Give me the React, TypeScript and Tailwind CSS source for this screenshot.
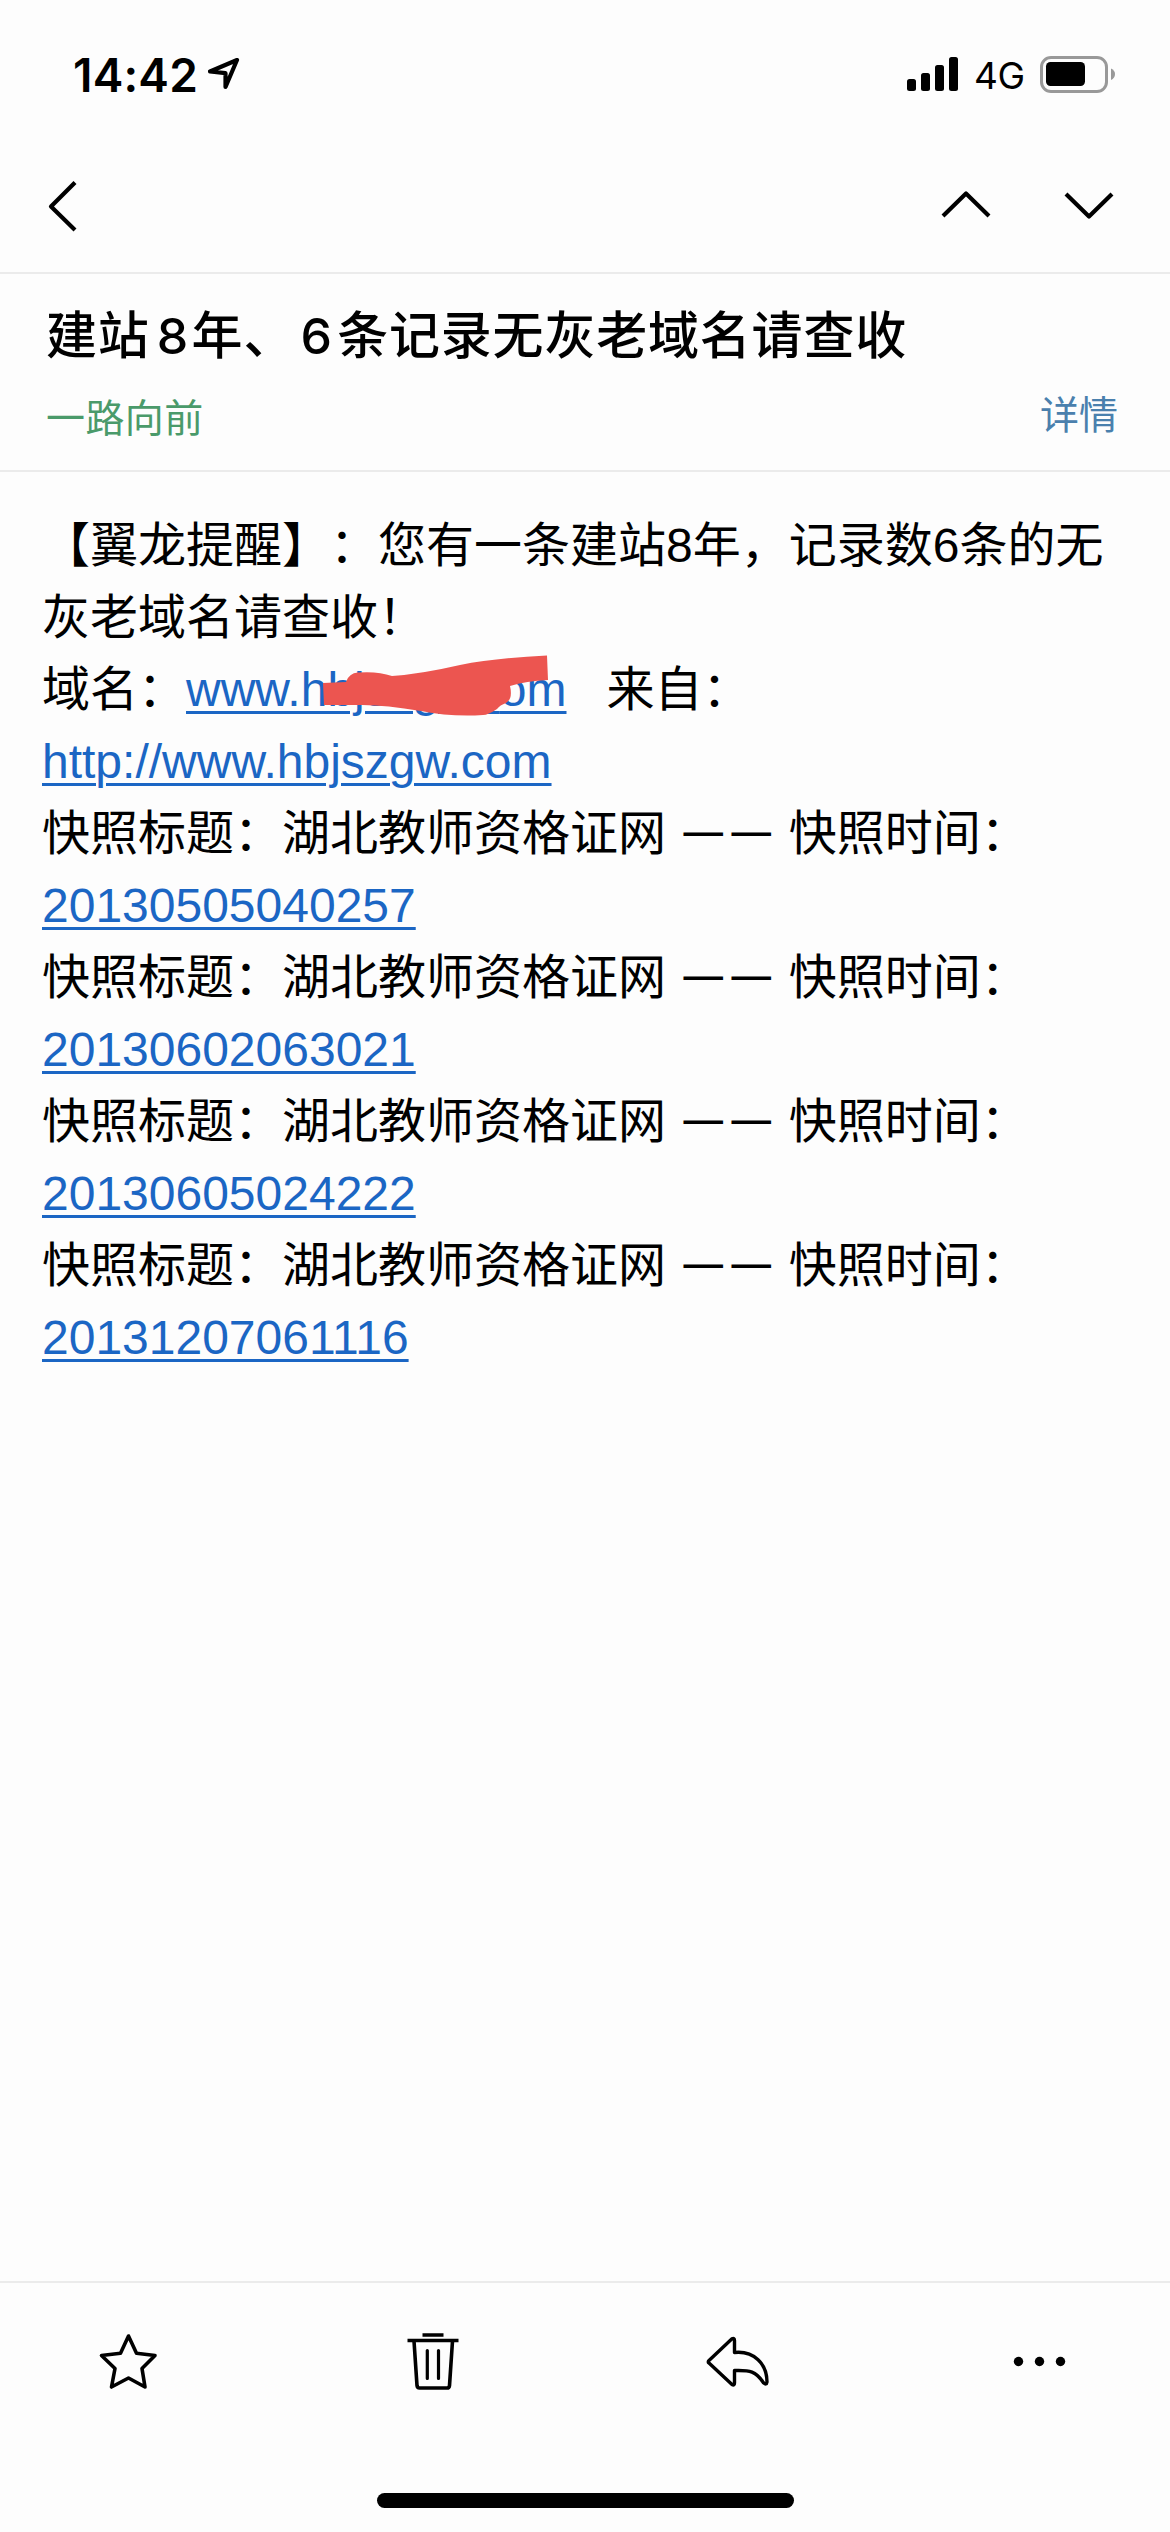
import type { ReactNode } from 'react'

const snapshots = [
  '20130505040257',
  '20130602063021',
  '20130605024222',
  '20131207061116',
]

function MailLink({ children }: { children: ReactNode }) {
  return (
    <a
      href="#"
      className="text-[#1b66c4] underline decoration-[3px] underline-offset-[5px]"
    >
      {children}
    </a>
  )
}

function StatusBar() {
  return (
    <div className="flex h-[147px] items-start justify-between pl-[73px] pr-[54px] pt-[50px]">
      <div className="flex h-12 items-center">
        <span className="w-[124px] pt-0.5 font-['Inter',sans-serif] text-[46px] font-semibold leading-[46px] tracking-[0.2px]">
          14:42
        </span>
        <svg className="ml-[11px] h-12 w-8" viewBox="0 0 32 48" fill="none">
          <path
            d="M29 10 L2 21.5 L17.5 23.2 L17.5 37 Z"
            stroke="#000"
            strokeWidth="4.2"
            strokeLinejoin="round"
          />
        </svg>
      </div>
      <div className="flex h-12 items-center">
        <svg className="h-12 w-[52px]" viewBox="0 0 52 48">
          <rect x="0" y="29" width="9" height="12" rx="2.5" />
          <rect x="14" y="23" width="9" height="18" rx="2.5" />
          <rect x="28" y="15" width="9" height="26" rx="2.5" />
          <rect x="42" y="7" width="9" height="34" rx="2.5" />
        </svg>
        <span className="ml-[15px] w-[66px] pt-1 font-['Inter',sans-serif] text-[37px] leading-[44px] tracking-[-0.5px]">
          4G
        </span>
        <svg className="h-12 w-[76px]" viewBox="0 0 76 48">
          <rect x="1.5" y="7.5" width="65" height="34" rx="9.5" fill="none" stroke="#999" strokeWidth="3" />
          <rect x="6" y="12" width="39" height="24" rx="4.5" />
          <path d="M71 18.5 Q75 20.5 75 24 Q75 28 71 30 Z" fill="#999" />
        </svg>
      </div>
    </div>
  )
}

function NavBar() {
  return (
    <div className="flex h-[127px] items-center justify-between border-b-2 border-[#ebebeb] pl-12 pr-14">
      <svg className="mb-[7px] h-[52px] w-8" viewBox="0 0 32 52" fill="none" stroke="#000" strokeWidth="4.2">
        <path d="M27 2.5 L3 26.5 L27 50" strokeLinejoin="round" />
      </svg>
      <div className="mb-[7px] flex gap-[73px]">
        <svg className="h-[52px] w-[50px]" viewBox="0 0 50 52" fill="none" stroke="#000" strokeWidth="4.2">
          <path d="M2 36 L25 13.5 L48 36" strokeLinejoin="round" />
        </svg>
        <svg className="h-[52px] w-[50px]" viewBox="0 0 50 52" fill="none" stroke="#000" strokeWidth="4.2">
          <path d="M2 14 L25 36.5 L48 14" strokeLinejoin="round" />
        </svg>
      </div>
    </div>
  )
}

function MailHeader() {
  return (
    <div className="h-[198px] border-b-2 border-[#ebebeb] pl-[46px] pr-[52px] pt-[26px]">
      <h1 className="whitespace-nowrap text-[51px] font-medium leading-[72px] tracking-[0.8px]">
        建站
        <span className="inline-block w-[42px] pl-1 text-center font-['Inter',sans-serif] text-[50px] font-medium tracking-normal">8</span>
        年、
        <span className="inline-block w-[42px] text-center font-['Inter',sans-serif] text-[50px] font-medium tracking-normal">6</span>
        条记录无灰老域名请查收
      </h1>
      <div className="flex items-start justify-between leading-[56px]">
        <span className="pt-[18px] text-[39px] tracking-[0.4px] text-[#4a9a6a]">一路向前</span>
        <a href="#" className="pt-[15px] text-[39px] text-[#4a80ad]">详情</a>
      </div>
    </div>
  )
}

function Dash() {
  return (
    <span className="inline-block w-12 -translate-y-1 text-center font-['Noto_Sans'] text-[43px] leading-none">
      —
    </span>
  )
}

function MailBody() {
  return (
    <div className="flex-1 whitespace-nowrap pl-[42px] pt-[38px] text-[48px] leading-[72px]">
      <div>【翼龙提醒】：您有一条建站8年，记录数6条的无</div>
      <div>灰老域名请查收！</div>
      <div className="h-[72px] whitespace-pre">
        域名：
        <span className="relative inline-block">
          <MailLink>
            www.hbjszg<span className="tracking-[-3px]">w.c</span>om
          </MailLink>
          {/* marker scribble over the domain */}
          <svg className="absolute left-0 top-0 h-[72px] w-[381px]" viewBox="0 0 381 72">
            <path
              d="M137 29 L160 28 Q163 19 172 18.5 Q192 17 206 22 Q235 20 274 11 Q310 4 361 1.5 L362 26 Q340 27 324 32 Q327 45 320 49 Q314 51 311 55 Q302 61 297 61 Q265 63 235 57 Q195 50 170 51 L138 51 Z"
              fill="#ec5550"
            />
          </svg>
        </span>
        {'   来自：'}
      </div>
      <div>
        <MailLink>http://www.hbjszgw.com</MailLink>
      </div>
      {snapshots.map((time) => (
        <div key={time}>
          <div className="h-[72px]">
            快照标题：湖北教师资格证网 <Dash /><Dash /> 快照时间：
          </div>
          <div className="h-[72px]">
            <MailLink>{time}</MailLink>
          </div>
        </div>
      ))}
    </div>
  )
}

function Toolbar() {
  return (
    <div className="h-[251px] border-t-2 border-[#ebebeb]">
      <div className="flex items-center pl-[98px] pt-[47px]">
        <svg className="h-[64px] w-[62px]" viewBox="0 0 62 64" fill="none" stroke="#000" strokeWidth="3.6">
          <path
            d="M30.5 6 L38.5 23.2 L57 25.5 L44 38.5 L47 57 L30.5 48 L13.5 57 L17 38.5 L3.5 25.5 L22.5 23.2 Z"
            strokeLinejoin="round"
          />
        </svg>
        <svg className="ml-[246px] h-[64px] w-[54px]" viewBox="0 0 54 64" fill="none" stroke="#000" strokeWidth="3.6">
          <path d="M16.5 5 H37.5 M1.5 10.5 H52.5" />
          <path d="M8 11 L11 55.5 Q11.3 58 13.5 58 H41 Q43.3 58 43.5 55.5 L46.5 11" />
          <path d="M21.3 20.5 V48.5 M32.5 20.5 V48.5" strokeLinecap="round" strokeWidth="3.2" />
        </svg>
        <svg className="ml-[245px] h-[64px] w-[66px]" viewBox="0 0 66 64" fill="none" stroke="#000" strokeWidth="3.4">
          <path
            d="M4 33 Q2.5 32 4 30.5 L27 8.8 Q29.5 7.5 29.5 10.5 V22.5 C49 20.5 62 34 62 52 Q61.5 55.5 58.5 52.8 C51 41 45 40 29.5 40.5 V53 Q29.5 56 27 54.5 Z"
            strokeLinejoin="round"
          />
        </svg>
        <svg className="ml-[237px] h-[64px] w-[62px]" viewBox="0 0 62 64">
          <circle cx="10.5" cy="31.5" r="4.7" />
          <circle cx="31.5" cy="31.5" r="4.7" />
          <circle cx="52.5" cy="31.5" r="4.7" />
        </svg>
      </div>
      <div className="mx-auto mt-[99px] h-[15px] w-[417px] rounded-full bg-black" />
    </div>
  )
}

export default function App() {
  return (
    <div className="flex h-[2532px] w-[1170px] flex-col overflow-hidden bg-[#fdfdfd] font-['Liberation_Sans','Noto_Sans_CJK_SC',sans-serif] text-black [text-spacing-trim:space-all]">
      <StatusBar />
      <NavBar />
      <MailHeader />
      <MailBody />
      <Toolbar />
    </div>
  )
}
